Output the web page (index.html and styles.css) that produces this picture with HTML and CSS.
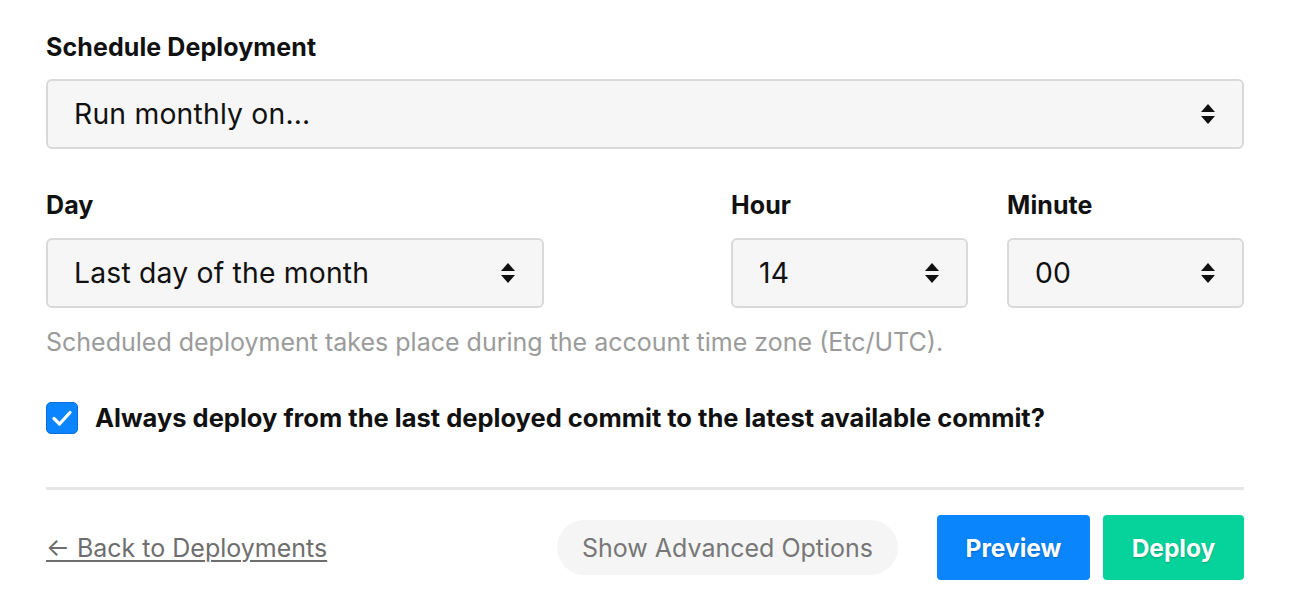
FILE: index.html
```html
<!DOCTYPE html>
<html lang="en">
<head>
<meta charset="utf-8">
<title>Schedule Deployment</title>
<link rel="stylesheet" href="styles.css">
</head>
<body>
<div class="page">
  <label class="label">Schedule Deployment</label>
  <div class="select select-full">
    <span class="select-text">Run monthly on...</span>
    <svg class="arrows" width="16" height="22" viewBox="0 0 16 22"><path d="M8 1 L15 9 L1 9 Z M1 13 L15 13 L8 21 Z" fill="#111"/></svg>
  </div>

  <div class="row">
    <div class="field">
      <label class="label">Day</label>
      <div class="select select-day">
        <span class="select-text">Last day of the month</span>
        <svg class="arrows" width="16" height="22" viewBox="0 0 16 22"><path d="M8 1 L15 9 L1 9 Z M1 13 L15 13 L8 21 Z" fill="#111"/></svg>
      </div>
    </div>
    <div class="field">
      <label class="label">Hour</label>
      <div class="select">
        <span class="select-text">14</span>
        <svg class="arrows" width="16" height="22" viewBox="0 0 16 22"><path d="M8 1 L15 9 L1 9 Z M1 13 L15 13 L8 21 Z" fill="#111"/></svg>
      </div>
    </div>
    <div class="field">
      <label class="label">Minute</label>
      <div class="select">
        <span class="select-text">00</span>
        <svg class="arrows" width="16" height="22" viewBox="0 0 16 22"><path d="M8 1 L15 9 L1 9 Z M1 13 L15 13 L8 21 Z" fill="#111"/></svg>
      </div>
    </div>
  </div>

  <p class="hint">Scheduled deployment takes place during the account time zone (Etc/UTC).</p>

  <div class="check-row">
    <span class="checkbox">
      <svg width="22" height="18" viewBox="0 0 22 18"><path d="M3 9.5 L8.5 15 L19 3.5" fill="none" stroke="#fff" stroke-width="3.2" stroke-linecap="round" stroke-linejoin="round"/></svg>
    </span>
    <span class="check-label">Always deploy from the last deployed commit to the latest available commit?</span>
  </div>

  <hr class="divider">

  <div class="footer">
    <a class="back" href="#">← Back to Deployments</a>
    <div class="actions">
      <button class="btn btn-ghost">Show Advanced Options</button>
      <button class="btn btn-blue">Preview</button>
      <button class="btn btn-green">Deploy</button>
    </div>
  </div>
</div>
</body>
</html>
```

FILE: styles.css
```css
html, body {
  margin: 0;
  padding: 0;
  background: #ffffff;
}

body {
  font-family: Inter, "Noto Sans", "Liberation Sans", sans-serif;
  color: #111;
}

.page {
  padding: 31px 46px 0 46px;
}

.label {
  display: block;
  font-size: 25px;
  font-weight: 700;
  line-height: 32px;
  margin-bottom: 16px;
  letter-spacing: 0.1px;
}

.select {
  box-sizing: border-box;
  height: 70px;
  border: 2px solid #d9d9d9;
  border-radius: 6px;
  background: #f6f6f6;
  display: flex;
  align-items: center;
  justify-content: space-between;
  padding: 0 26px 0 26px;
}

.select-text {
  font-size: 28.3px;
  color: #111;
  letter-spacing: 0.2px;
}

.arrows {
  display: block;
}

.row {
  display: grid;
  grid-template-columns: 1fr 237px 237px;
  column-gap: 39px;
  margin-top: 40px;
}

.field .label {
  margin-bottom: 17px;
}

.select-day {
  width: 498px;
}

.hint {
  margin: 18px 0 0 0;
  font-size: 25px;
  line-height: 32px;
  color: #9b9b9b;
}

.check-row {
  display: flex;
  align-items: center;
  margin-top: 44px;
}

.checkbox {
  width: 32px;
  height: 32px;
  box-sizing: border-box;
  border-radius: 5px;
  background: #0a84ff;
  border: 1px solid #0870d8;
  display: flex;
  align-items: center;
  justify-content: center;
  margin-right: 17px;
}

.check-label {
  font-size: 25.5px;
  font-weight: 700;
  line-height: 32px;
}

.divider {
  border: 0;
  height: 3px;
  background: #e6e6e6;
  margin: 53px 0 0 0;
}

.footer {
  display: flex;
  align-items: center;
  justify-content: space-between;
  margin-top: 25px;
}

.back {
  font-size: 25px;
  color: #6e6e6e;
  text-decoration: underline;
  text-underline-offset: 3px;
  text-decoration-thickness: 2px;
}

.actions {
  display: flex;
  align-items: center;
}

.btn {
  font-family: inherit;
  border: 0;
  font-size: 25px;
  cursor: pointer;
}

.btn-ghost {
  height: 55px;
  width: 341px;
  border-radius: 28px;
  background: #f5f5f5;
  color: #777;
  margin-right: 39px;
}

.btn-blue,
.btn-green {
  height: 65px;
  border-radius: 4px;
  color: #fff;
  font-weight: 700;
  font-size: 24.5px;
  text-shadow: 0 1px 2px rgba(0,0,0,0.25);
}

.btn-blue {
  width: 153px;
  background: #0a85fb;
  margin-right: 13px;
}

.btn-green {
  width: 141px;
  background: #05d39b;
}
```
